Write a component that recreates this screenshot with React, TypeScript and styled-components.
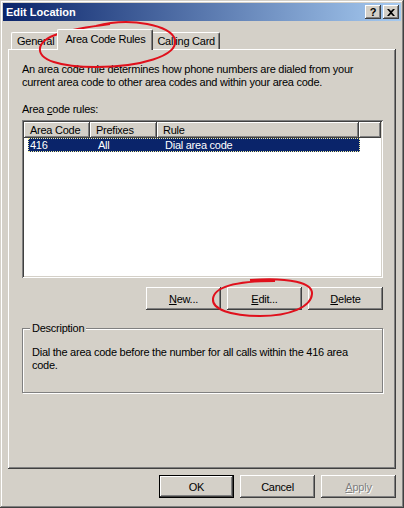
import React from 'react';
import styled, { createGlobalStyle } from 'styled-components';

const GlobalStyle = createGlobalStyle`
	html, body {
		margin: 0;
		padding: 0;
		background: #d4d0c8;
	}
	body {
		font-family: 'Liberation Sans', Arial, sans-serif;
		font-size: 11px;
		letter-spacing: -0.25px;
		color: #000;
	}
`;

const raised = `
	box-shadow: inset -1px -1px #404040, inset 1px 1px #fff, inset -2px -2px #808080, inset 2px 2px #d4d0c8;
`;

const Window = styled.div`
	position: relative;
	width: 404px;
	height: 508px;
	box-sizing: border-box;
	padding: 3px;
	display: flex;
	flex-direction: column;
	background: #d4d0c8;
	box-shadow: inset -1px -1px #404040, inset 1px 1px #d4d0c8, inset -2px -2px #808080, inset 2px 2px #fff;
`;

const TitleBar = styled.div`
	height: 18px;
	display: flex;
	align-items: center;
	padding: 0 2px 0 3px;
	background: linear-gradient(to right, #0a246a, #a6caf0);
	color: #fff;
	h1 {
		flex: 1;
		margin: 0;
		font-size: 11px;
		font-weight: bold;
		letter-spacing: 0;
	}
`;

const CaptionButton = styled.div<{ $gap?: number }>`
	width: 16px;
	height: 14px;
	margin-left: ${({ $gap }) => $gap ?? 0}px;
	box-sizing: border-box;
	display: flex;
	align-items: center;
	justify-content: center;
	background: #d4d0c8;
	color: #000;
	font-size: 11px;
	font-weight: bold;
	${raised}
`;

const Body = styled.div`
	flex: 1;
	display: flex;
	flex-direction: column;
	padding: 8px 5px 7px 5px;
`;

const TabStrip = styled.div`
	display: flex;
	align-items: flex-end;
	height: 20px;
	padding-left: 3px;
`;

const Tab = styled.div<{ $active?: boolean }>`
	position: relative;
	z-index: ${({ $active }) => ($active ? 1 : 0)};
	height: ${({ $active }) => ($active ? 21 : 17)}px;
	margin: 0 ${({ $active }) => ($active ? -2 : 0)}px ${({ $active }) => ($active ? -1 : 0)}px;
	padding: ${({ $active }) => ($active ? '3px 7px 0 7px' : '0 4px 0 5px')};
	box-sizing: border-box;
	display: flex;
	align-items: ${({ $active }) => ($active ? 'flex-start' : 'center')};
	background: #d4d0c8;
	border-top: 1px solid #fff;
	border-left: 1px solid #fff;
	border-right: 1px solid #404040;
	border-radius: 2px 2px 0 0;
	box-shadow: inset -1px 0 #808080;
	white-space: nowrap;
`;

const Panel = styled.div`
	height: 420px;
	box-sizing: border-box;
	padding: 14px 13px 0 14px;
	display: flex;
	flex-direction: column;
	background: #d4d0c8;
	box-shadow: inset -1px -1px #404040, inset 1px 1px #fff, inset -2px -2px #808080;
`;

const Text = styled.p`
	margin: 0;
	line-height: 13px;
`;

const Label = styled.div`
	margin-top: 14px;
	line-height: 13px;
`;

const ListView = styled.div`
	margin-top: 4px;
	height: 158px;
	box-sizing: border-box;
	padding: 2px;
	background: #fff;
	box-shadow: inset 1px 1px #808080, inset -1px -1px #fff, inset 2px 2px #404040, inset -2px -2px #d4d0c8;
`;

const HeaderRow = styled.div`
	display: flex;
	height: 16px;
`;

const HeaderCell = styled.div<{ $w?: number }>`
	flex: ${({ $w }) => ($w ? `0 0 ${$w}px` : 1)};
	box-sizing: border-box;
	padding-left: 6px;
	line-height: 16px;
	background: #d4d0c8;
	box-shadow: inset -1px -1px #404040, inset 1px 1px #fff, inset -2px -2px #808080;
`;

const Row = styled.div<{ $selected?: boolean }>`
	display: flex;
	width: 332px;
	height: 14px;
	margin-left: 4px;
	line-height: 14px;
	background: ${({ $selected }) => ($selected ? '#0a246a' : 'transparent')};
	color: ${({ $selected }) => ($selected ? '#fff' : '#000')};
	outline: ${({ $selected }) => ($selected ? '1px dotted #f4f0a0' : 'none')};
	outline-offset: -1px;
`;

const Cell = styled.div<{ $w?: number }>`
	flex: ${({ $w }) => ($w ? `0 0 ${$w}px` : 1)};
	padding-left: 2px;
	box-sizing: border-box;
`;

const ButtonRow = styled.div<{ $top: number }>`
	display: flex;
	justify-content: flex-end;
	gap: 6px;
	margin-top: ${({ $top }) => $top}px;
`;

const Button = styled.div<{ $default?: boolean; $disabled?: boolean }>`
	width: 75px;
	height: 23px;
	box-sizing: border-box;
	display: flex;
	align-items: center;
	justify-content: center;
	background: #d4d0c8;
	color: ${({ $disabled }) => ($disabled ? '#808080' : '#000')};
	text-shadow: ${({ $disabled }) => ($disabled ? '1px 1px #fff' : 'none')};
	border: ${({ $default }) => ($default ? '1px solid #000' : 'none')};
	${raised}
`;

const GroupBox = styled.div`
	position: relative;
	margin-top: 18px;
	height: 65px;
	box-sizing: border-box;
	padding: 17px 9px 0 9px;
	border: 1px solid #808080;
	box-shadow: 1px 1px #fff, inset 1px 1px #fff;
`;

const Legend = styled.span`
	position: absolute;
	top: -7px;
	left: 7px;
	padding: 0 2px;
	line-height: 13px;
	background: #d4d0c8;
`;

const Footer = styled.div`
	display: flex;
	justify-content: flex-end;
	gap: 6px;
	margin-top: 6px;
`;

const Marks = styled.svg`
	position: absolute;
	left: 0;
	top: 0;
	pointer-events: none;
`;

const rules = [{ code: '416', prefixes: 'All', rule: 'Dial area code' }];

export default function App() {
	return (
		<>
			<GlobalStyle />
			<Window>
				<TitleBar>
					<h1>Edit Location</h1>
					<CaptionButton>?</CaptionButton>
					<CaptionButton $gap={2}>
						<svg width="8" height="7" viewBox="0 0 8 7">
							<path d="M0 0h2l2 2 2-2h2L5 3.5 8 7H6L4 5 2 7H0l3-3.5z" fill="#000" />
						</svg>
					</CaptionButton>
				</TitleBar>
				<Body>
					<TabStrip>
						<Tab>General</Tab>
						<Tab $active>Area Code Rules</Tab>
						<Tab>Calling Card</Tab>
					</TabStrip>
					<Panel>
						<Text>
							An area code rule determines how phone numbers are dialed from your
							<br />
							current area code to other area codes and within your area code.
						</Text>
						<Label>
							Area <u>c</u>ode rules:
						</Label>
						<ListView>
							<HeaderRow>
								<HeaderCell $w={66}>Area Code</HeaderCell>
								<HeaderCell $w={67}>Prefixes</HeaderCell>
								<HeaderCell $w={202}>Rule</HeaderCell>
								<HeaderCell />
							</HeaderRow>
							{rules.map((r, i) => (
								<Row key={i} $selected={i === 0}>
									<Cell $w={68}>{r.code}</Cell>
									<Cell $w={67}>{r.prefixes}</Cell>
									<Cell>{r.rule}</Cell>
								</Row>
							))}
						</ListView>
						<ButtonRow $top={9}>
							<Button>
								<span>
									<u>N</u>ew...
								</span>
							</Button>
							<Button>
								<span>
									<u>E</u>dit...
								</span>
							</Button>
							<Button>
								<span>
									<u>D</u>elete
								</span>
							</Button>
						</ButtonRow>
						<GroupBox>
							<Legend>Description</Legend>
							<Text>
								Dial the area code before the number for all calls within the 416 area
								<br />
								code.
							</Text>
						</GroupBox>
					</Panel>
					<Footer>
						<Button $default>OK</Button>
						<Button>Cancel</Button>
						<Button $disabled>
							<span>
								<u>A</u>pply
							</span>
						</Button>
					</Footer>
				</Body>
				<Marks width="404" height="508" viewBox="0 0 404 508">
					<g fill="none" stroke="#e0101c" strokeWidth="2">
						<path d="M96 26C130 17 172 25 175 40C178 56 140 67 96 67C60 67 38 60 40 48C42 36 64 30 110 24" />
						<path d="M250 280C290 277 313 283 312 294C311 307 290 316 260 316C230 316 212 309 213 299C214 287 235 281 275 281" />
					</g>
				</Marks>
			</Window>
		</>
	);
}
